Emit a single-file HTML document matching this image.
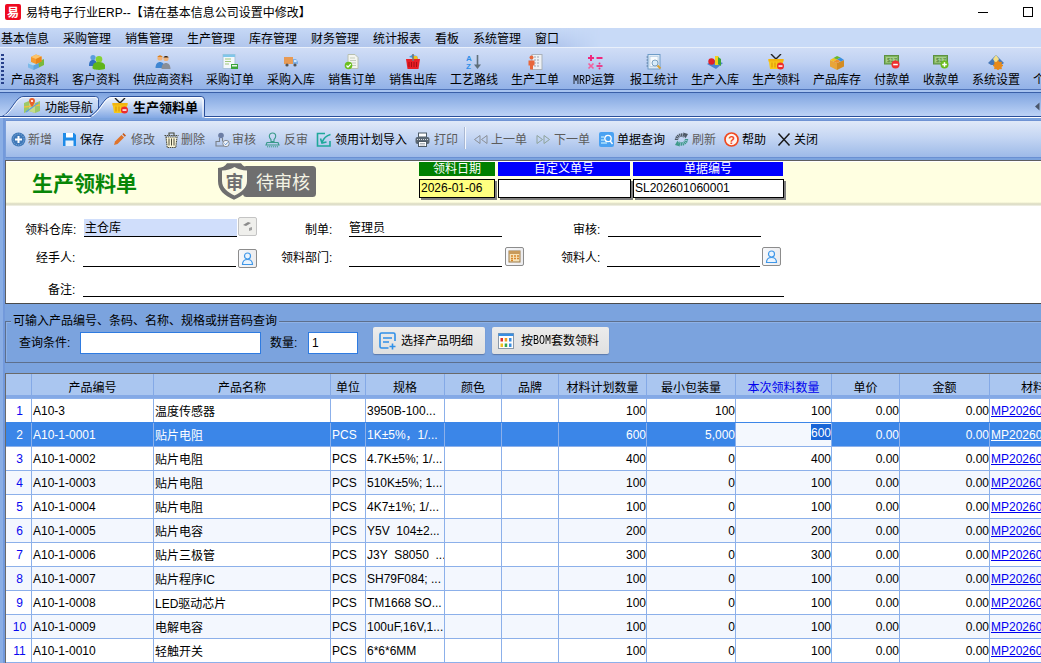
<!DOCTYPE html>
<html lang="zh-CN"><head><meta charset="utf-8"><title>易特电子行业ERP</title>
<style>
*{box-sizing:border-box;margin:0;padding:0}
html,body{width:1041px;height:663px;overflow:hidden}
body{position:relative;background:#7ba3de;font-family:"Liberation Sans","Noto Sans CJK SC","WenQuanYi Zen Hei",sans-serif;font-size:12px;color:#000;line-height:1}
.abs{position:absolute}
#title{position:absolute;left:0;top:0;width:1041px;height:28px;background:#fff}
#title .logo{position:absolute;left:5px;top:4px;width:16px;height:16px;background:#ee0a20;border-radius:2px;color:#fff;font-size:12px;font-weight:bold;line-height:16px;text-align:center;font-family:"Noto Sans CJK SC",sans-serif}
#title .tt{position:absolute;left:26px;top:6px;font-size:12px;line-height:15px;font-family:"Liberation Sans","Noto Sans CJK SC",sans-serif;white-space:nowrap;letter-spacing:0}
#title .min{position:absolute;left:978px;top:12px;width:10px;height:1px;background:#000}
#title .max{position:absolute;left:1023px;top:7px;width:10px;height:10px;border:1px solid #000}
#menu{position:absolute;left:0;top:28px;width:1041px;height:19px;background:#c8daf7}
#menu:before{content:"";position:absolute;left:0;top:0;width:600px;height:19px;background:linear-gradient(#c6d8f6,#b1c6ec);-webkit-mask-image:linear-gradient(90deg,#000 0,#000 560px,transparent 600px);mask-image:linear-gradient(90deg,#000 0,#000 560px,transparent 600px)}
#menu span{position:absolute;top:5px;line-height:13px;white-space:nowrap}
#tb1{position:absolute;left:0;top:47px;width:1041px;height:43px;background:linear-gradient(#d0ddf6 0%,#bfd1f2 35%,#a8c1ed 65%,#93b2e7 100%);border-top:1px solid #e9f0fb;border-bottom:1px solid #4f74ba}
#tb1 .grip{position:absolute;left:1px;top:6px;width:3px;height:32px;background:repeating-linear-gradient(#27408b 0,#27408b 2px,transparent 2px,transparent 4px)}
#tb1 .it{position:absolute;top:26px;line-height:13px;white-space:nowrap;text-align:center}
#tb1 svg{position:absolute;top:6px}
#tabs{position:absolute;left:0;top:90px;width:1041px;height:30px}
#tb2{position:absolute;left:5px;top:120px;width:1036px;height:38px;background:linear-gradient(#e0e9f8 0%,#c5d6f3 45%,#9dbae8 100%);border-left:1px solid #7a9fdb;border-top:1px solid #6f93d3;border-bottom:1px solid #6a90d2}
#tb2 span{position:absolute;top:13px;line-height:13px;white-space:nowrap}
#tb2 span.d{color:#5c5c5c}
#tb2 svg{position:absolute;top:11px}
#yel{position:absolute;left:5px;top:160px;width:1036px;height:46px;border-left:1px solid #5f5f5f;border-top:1px solid #5f5f5f;background:linear-gradient(#ffffff 0,#ffffff 1px,#ffffe1 1px,#ffffe1 41px,#d8d8c0 43px,#f4f4ea 45px)}
#yel h1{position:absolute;left:26px;top:11px;font-size:21px;line-height:24px;font-weight:bold;color:#078607;font-family:"Liberation Sans","Noto Sans CJK SC",sans-serif;white-space:nowrap}
.lab{position:absolute;top:1px;height:14px;color:#fff;text-align:center;line-height:15px;font-size:12px}
.fld{position:absolute;top:18px;height:19px;border:1px solid #000;background:#fff;box-shadow:2px 2px 0 #808080;line-height:16px;padding-left:1px;font-size:12px;white-space:nowrap}
#form{position:absolute;left:5px;top:206px;width:1036px;height:98px;background:#fff;border-left:1px solid #5f5f5f;border-bottom:1px solid #4a4a4a}
#form .l{position:absolute;line-height:13px;white-space:nowrap;text-align:right}
#form .u{position:absolute;height:1px;background:#000}
#form .b{position:absolute;width:19px;height:19px;border:1px solid #c4c4c4;border-radius:2px;background:#efefec}
#form .b.bl{background:linear-gradient(90deg,#f7f8fb,#ececee);border-color:#8c8c8c}
#fs{position:absolute;left:5px;top:321px;width:1040px;height:42px;border:1px solid #5d6f8c;box-shadow:inset 1px 1px 0 #8fb2e6}
#fs .lg{position:absolute;left:5px;top:-7px;background:#7ba3de;line-height:13px;padding:0 2px;white-space:nowrap}
.inp{position:absolute;background:#fff;border:1px solid #2f7be0;line-height:18px;font-size:12px}
.btn{position:absolute;top:327px;height:27px;background:linear-gradient(#ececec,#e0e0e0);border-radius:2px;box-shadow:0 1px 1px rgba(60,80,120,.5);line-height:29px;white-space:nowrap}
#grid{position:absolute;left:5px;top:373px;width:1036px;height:290px;background:#fff;border-left:1px solid #6a6a6a;border-top:1px solid #6a6a6a;overflow:hidden}
.ghead{position:absolute;left:0;top:0;width:1100px;height:25px;background:linear-gradient(#aac6f0 0,#aac6f0 21px,#84a9e6 21px,#84a9e6 25px)}
.hc{position:absolute;top:0;height:21px;border-left:1px solid #84a9e6;text-align:center;line-height:29px;white-space:nowrap}
.hc:first-child{border-left:none}
.hc.blue{color:#0000ee}
.gr{position:absolute;left:0;width:1100px;height:24px;background:#fff;border-top:1px solid #8cb0ea}
.gr.alt{background:#f3f7fe}
.gr.sel{background:#3b86e8;color:#fff;border-top-color:#3b86e8}
.c{position:absolute;top:0;height:23px;border-left:1px solid #8cb0ea;line-height:25px;white-space:pre;overflow:hidden;padding-left:1px}
.c:first-child{border-left:none}
.c.num{color:#0808f0;text-align:center;padding:0 0 0 3px}
.gr.sel .c.num{color:#fff}
.c.r{text-align:right;padding-right:0}
.c.lnk{color:#0000f0;text-decoration:underline;text-underline-offset:1px}
.gr.sel .c.lnk{color:#fff}
.c.edit{background:#f4f8fe;text-align:right;padding:0;line-height:15px}
.c.edit .hl{display:inline-block;background:#1a66d6;color:#fff;height:16px;line-height:19px;vertical-align:top;margin-top:1px;overflow:hidden}
i{font-style:normal;font-family:"Liberation Mono","DejaVu Sans Mono",monospace;font-size:10px;letter-spacing:0;display:inline-block;transform:scaleY(1.2);transform-origin:50% 75%}
.c.cj{line-height:27px}
#lb1{position:absolute;left:0;top:118px;width:3px;height:545px;background:#8aaee5}
#lb2{position:absolute;left:3px;top:118px;width:2px;height:545px;background:#7299db}

</style></head><body>
<div id="title"><div class="logo">易</div><div class="tt">易特电子行业ERP--【请在基本信息公司设置中修改】</div><div class="min"></div><div class="max"></div></div>
<div id="menu"><span style="left:1px">基本信息</span><span style="left:63px">采购管理</span><span style="left:125px">销售管理</span><span style="left:187px">生产管理</span><span style="left:249px">库存管理</span><span style="left:311px">财务管理</span><span style="left:373px">统计报表</span><span style="left:435px">看板</span><span style="left:473px">系统管理</span><span style="left:535px">窗口</span></div>
<div id="tb1"><div class="grip"></div>
<svg style="left:28px" width="16" height="16" viewBox="0 0 16 16"><path d="M0 9.500l5.500-2.500 5.500 2v4.500l-5.500 2.500-5.500-2.500z" fill="#7db9e8"/><path d="M0 9.500l5.500 2 5.500-2.500-5.500-2z" fill="#b5dbf5"/><path d="M5.500 11.500v4.500l5.500-2.500v-4.500z" fill="#5fa4dc"/><path d="M10.500 7.500l5.500-2.500v6l-5 2.500z" fill="#79b93c"/><path d="M3 3l5-2.500 5.500 2v5l-5.500 2.500-5-2z" fill="#f59a2e"/><path d="M3 3l5 2 5.500-2.500-5.500-2z" fill="#fbc46c"/><path d="M8 5v5l5.500-2.500v-5z" fill="#e8851a"/></svg>
<div class="it" style="left:11px">产品资料</div>
<svg style="left:89px" width="16" height="16" viewBox="0 0 16 16"><circle cx="4" cy="3.500" r="2.600" fill="#5a9ede"/><path d="M0 12c0-4.500 1.500-6 4-6s4 1.500 4 6z" fill="#2f6fc0"/><circle cx="10" cy="5.200" r="3.300" fill="#86d232"/><path d="M3.500 14c0-4.500 2.500-6 6.500-6s6.500 1.500 6.500 6c0 2.500-13 2.500-13 0z" fill="#5fb51a"/></svg>
<div class="it" style="left:72px">客户资料</div>
<svg style="left:155px" width="16" height="16" viewBox="0 0 16 16"><circle cx="5" cy="4" r="2.600" fill="#f0b27a"/><path d="M2.500 3c.5-2 4.500-2 5 0z" fill="#d9801e"/><path d="M0.500 14c0-4 2-6 4.500-6s4.500 2 4.500 6z" fill="#3f86d2"/><circle cx="11" cy="4.500" r="2.600" fill="#f0b27a"/><path d="M8.500 3.500c.5-2 4.500-2 5 0z" fill="#3a2a1a"/><path d="M6.500 15c0-4 2-6 4.500-6s4.500 2 4.500 6z" fill="#8a8f98"/></svg>
<div class="it" style="left:133px">供应商资料</div>
<svg style="left:222px" width="16" height="16" viewBox="0 0 16 16"><rect x="1" y="0.500" width="12" height="14" fill="#f4f8fb" stroke="#a9c4d8"/><rect x="1" y="0.500" width="12" height="2.500" fill="#7fc6ea"/><path d="M3 5h6M3 7.500h6M3 10h4" stroke="#9fc77a" stroke-width="1"/><rect x="9" y="10" width="7" height="5" fill="#3aa53a"/><rect x="10" y="11" width="5" height="1.500" fill="#e8f6e8"/></svg>
<div class="it" style="left:206px">采购订单</div>
<svg style="left:283px" width="16" height="16" viewBox="0 0 16 16"><rect x="1" y="3" width="9" height="7" fill="#e79a55"/><path d="M10 5h3l2 2.500v2.500h-5z" fill="#7fb0e6"/><rect x="11" y="6" width="2.500" height="2" fill="#d5e8fb"/><circle cx="4" cy="11" r="1.600" fill="#555"/><circle cx="12" cy="11" r="1.600" fill="#555"/></svg>
<div class="it" style="left:267px">采购入库</div>
<svg style="left:344px" width="16" height="16" viewBox="0 0 16 16"><path d="M4 0.500h7l3 3v11h-10z" fill="#f3f5f0" stroke="#b8c0b0"/><path d="M6 4h5M6 6.500h6M6 9h6M6 11.500h6" stroke="#c3cbbb" stroke-width="1"/><circle cx="4.500" cy="11.500" r="3.800" fill="#6bbf1f"/><path d="M2.500 11.500l1.500 1.600 2.800-3" stroke="#fff" stroke-width="1.300" fill="none"/></svg>
<div class="it" style="left:328px">销售订单</div>
<svg style="left:405px" width="16" height="16" viewBox="0 0 16 16"><path d="M4 3l3-2 5 1 1 3z" fill="#3a9ae0"/><path d="M8 2l4 0 1 3h-5z" fill="#f0c020"/><path d="M1 5h14l-1.500 10h-11z" fill="#e81e25"/><path d="M4 8v5M6.500 8v5M9 8v5M11.500 8v5" stroke="#a80d12" stroke-width="1"/><rect x="7.200" y="0" width="1.600" height="7" fill="#777"/></svg>
<div class="it" style="left:389px">销售出库</div>
<svg style="left:466px" width="16" height="16" viewBox="0 0 16 16"><text x="0" y="7" font-size="8" font-weight="bold" fill="#2f8fe8" font-family="Liberation Sans,sans-serif">A</text><text x="0" y="15" font-size="8" font-weight="bold" fill="#2f8fe8" font-family="Liberation Sans,sans-serif">Z</text><path d="M11.500 1v11" stroke="#5f6f7a" stroke-width="1.600"/><path d="M8 10.500h7l-3.500 4.500z" fill="#5f6f7a"/></svg>
<div class="it" style="left:450px">工艺路线</div>
<svg style="left:527px" width="16" height="16" viewBox="0 0 16 16"><rect x="5" y="0.500" width="10" height="15" fill="#eef1f4" stroke="#aab2bb"/><path d="M7 3h6M7 6h6M7 9h6M7 12h6" stroke="#9aa4b0" stroke-width="1.200" stroke-dasharray="2 1"/><circle cx="4.500" cy="3.500" r="2" fill="#e8673a"/><path d="M1.500 6.500h6v5h-1.500v4h-3v-4h-1.500z" fill="#e8673a"/></svg>
<div class="it" style="left:511px">生产工单</div>
<svg style="left:587px" width="16" height="16" viewBox="0 0 16 16"><path d="M1 4h6M4 1v6" stroke="#f0287c" stroke-width="2"/><path d="M9.500 4h6" stroke="#f0287c" stroke-width="2"/><path d="M1.500 9.500l5 5M6.500 9.500l-5 5" stroke="#f3609c" stroke-width="1.700"/><path d="M9.500 12h6" stroke="#f0287c" stroke-width="1.700"/><circle cx="12.500" cy="9.500" r="1" fill="#f0287c"/><circle cx="12.500" cy="14.500" r="1" fill="#f0287c"/></svg>
<div class="it" style="left:573px"><i>MRP</i>运算</div>
<svg style="left:646px" width="16" height="16" viewBox="0 0 16 16"><rect x="2" y="0.500" width="12" height="14.500" fill="#dfeaf4" stroke="#6e9cc8"/><rect x="4" y="2.500" width="8" height="10" fill="#f8fbfd" stroke="#a8c4de" stroke-width=".6"/><path d="M2 3h-1.500M2 6h-1.500M2 9h-1.500M2 12h-1.500" stroke="#56789a" stroke-width="1"/><circle cx="9" cy="9" r="3" fill="#d8ecfa" stroke="#7aa0c0"/><path d="M11.500 11.500l3 3" stroke="#d9a030" stroke-width="2"/></svg>
<div class="it" style="left:630px">报工统计</div>
<svg style="left:707px" width="16" height="16" viewBox="0 0 16 16"><path d="M0 10l7-4 9 3-7 6z" fill="#4f84cf"/><circle cx="4.500" cy="7.500" r="3.200" fill="#e0202a"/><rect x="8" y="2" width="3.500" height="9" fill="#f2d21a"/><path d="M11 3l3 2v7l-3-2z" fill="#3da33a"/></svg>
<div class="it" style="left:691px">生产入库</div>
<svg style="left:768px" width="16" height="16" viewBox="0 0 16 16"><path d="M3 0l5 5 5-5" stroke="#222" stroke-width="1.400" fill="none"/><path d="M0.500 5h15l-1.500 10h-12z" fill="#f7c81a"/><path d="M0.500 5h15v2.500h-15z" fill="#f2b40e"/><path d="M4 8.500v5M7 8.500v5M10 8.500v5" stroke="#e09a08" stroke-width="1.200"/><circle cx="12.500" cy="12" r="3.500" fill="#ee2b2b"/><rect x="10.500" y="11.300" width="4" height="1.500" fill="#fff"/></svg>
<div class="it" style="left:752px">生产领料</div>
<svg style="left:829px" width="16" height="16" viewBox="0 0 16 16"><path d="M1 6l7 3v7l-7-3.500z" fill="#e8a53a"/><path d="M8 9l7-3v6.500l-7 3.500z" fill="#d48c22"/><path d="M1 6l3.500-2 3.500 1.500-3.500 2z" fill="#f4c21e"/><path d="M4.500 4l3.500-2 3.500 1.500-3.500 2z" fill="#69b82a"/><path d="M8 5.500l3.500-2 3.500 2.500-3.500 1.500z" fill="#3a8fe0"/><path d="M4.500 7.500l3.500-2 3.500 1.500-3.500 2z" fill="#f0902a"/></svg>
<div class="it" style="left:813px">产品库存</div>
<svg style="left:884px" width="16" height="16" viewBox="0 0 16 16"><rect x="0.500" y="1.500" width="14" height="8.500" fill="#7fb35e" stroke="#5d9240"/><rect x="2" y="3" width="11" height="5.500" fill="#a5cf8a"/><text x="3" y="8" font-size="6" fill="#4b7d32" font-family="Liberation Sans,sans-serif">$17</text><circle cx="11.500" cy="10.500" r="4" fill="#ee3030"/><rect x="9.200" y="9.800" width="4.600" height="1.500" fill="#fff"/></svg>
<div class="it" style="left:874px">付款单</div>
<svg style="left:933px" width="16" height="16" viewBox="0 0 16 16"><rect x="0.500" y="1.500" width="14" height="8.500" fill="#7fb35e" stroke="#5d9240"/><rect x="2" y="3" width="11" height="5.500" fill="#a5cf8a"/><text x="3" y="8" font-size="6" fill="#4b7d32" font-family="Liberation Sans,sans-serif">$17</text><circle cx="11.500" cy="10.500" r="4" fill="#6bbb1e"/><rect x="9.200" y="9.800" width="4.600" height="1.500" fill="#fff"/><rect x="10.750" y="8.200" width="1.500" height="4.600" fill="#fff"/></svg>
<div class="it" style="left:923px">收款单</div>
<svg style="left:988px" width="16" height="16" viewBox="0 0 16 16"><path d="M0 9l8-8 8 8-3 2h-10z" fill="#4778b8"/><path d="M8 1l3 4-3 5-3-5z" fill="#f4e08a"/><circle cx="10" cy="11.500" r="4" fill="#e88a1a"/><circle cx="10" cy="11.500" r="1.500" fill="#fbe7b0"/><path d="M10 6.500v10M5 11.500h10M6.500 8l7 7M13.500 8l-7 7" stroke="#e88a1a" stroke-width="1.500"/></svg>
<div class="it" style="left:972px">系统设置</div>
<div class="it" style="left:1033px">个人</div>
</div>
<div id="tabs"><svg width="1041" height="30" viewBox="0 0 1041 30" style="position:absolute;left:0;top:0">
<defs><linearGradient id="tg0" x1="0" y1="0" x2="0" y2="1"><stop offset="0" stop-color="#7fa4e0"/><stop offset="1" stop-color="#bdd3f6"/></linearGradient>
<linearGradient id="tg1" x1="0" y1="0" x2="0" y2="1"><stop offset="0" stop-color="#dbe6f9"/><stop offset="1" stop-color="#a3bfec"/></linearGradient>
<linearGradient id="tg2" x1="0" y1="0" x2="0" y2="1"><stop offset="0" stop-color="#f4f8fd"/><stop offset=".45" stop-color="#c3d5f3"/><stop offset="1" stop-color="#82a8e4"/></linearGradient></defs>
<rect x="0" y="0" width="1041" height="2" fill="#a8c4f0"/>
<rect x="0" y="2" width="1041" height="1" fill="#3a60a8"/>
<rect x="0" y="3" width="1041" height="23" fill="url(#tg0)"/>
<rect x="0" y="28" width="1041" height="2" fill="#7ba3de"/>
<path d="M2 26.500C9 24 15 10 20 7.500q1.500-1 4-1h71.500q3 0 3 3v17z" fill="url(#tg1)" stroke="#2f539c" stroke-width="1"/>
<path d="M4.500 25.500C11 23 16 10.500 21 8.300q1.500-.8 3.500-.8h70.500q2.500 0 2.500 2.500" fill="none" stroke="#f3f7fd" stroke-width="1"/>
<rect x="0" y="26" width="1041" height="1" fill="#2a4f9a"/>
<rect x="0" y="27" width="1041" height="1" fill="#ffffff"/>
<path d="M90 28C97 24 103 10 108 7.500q1.500-1 4-1h89q3.500 0 3.500 3.500v18z" fill="url(#tg2)"/>
<path d="M89 26.500C97 24 103 10 108 7.500q1.500-1 4-1h89q3.500 0 3.500 3.500v16.500" fill="none" stroke="#2a4f9a" stroke-width="1"/>
<path d="M91.500 26.500C99 23 104 10.500 109 8.300q1.500-.8 3.500-.8h88q2.500 0 2.500 2.500v17.500" fill="none" stroke="#ffffff" stroke-width="1"/>
<path d="M1039.500 12.500v8l-4.500-4z" fill="#4a566a"/>
</svg>
<svg style="position:absolute;left:24px;top:8px" width="16" height="16" viewBox="0 0 16 16"><path d="M0 5l5-2 6 2 5-2v10l-5 2-6-2-5 2z" fill="#9cc96a"/><path d="M5 3l6 2v10l-6-2z" fill="#c6dc8a"/><path d="M0 9l16-2" stroke="#f0c040" stroke-width="1.500"/><path d="M2 14l12-9" stroke="#5da0e0" stroke-width="1.200"/><path d="M8 0a3 3 0 0 1 3 3c0 2-3 6-3 6s-3-4-3-6a3 3 0 0 1 3-3z" fill="#e8602a"/><circle cx="8" cy="3" r="1.100" fill="#fff"/></svg>
<span style="position:absolute;left:45px;top:11px;line-height:14px;font-size:12px;white-space:nowrap">功能导航</span>
<svg style="position:absolute;left:112px;top:8px" width="16" height="16" viewBox="0 0 16 16"><path d="M3 0l5 5 5-5" stroke="#222" stroke-width="1.400" fill="none"/><path d="M0.500 5h15l-1.500 10h-12z" fill="#f7c81a"/><path d="M0.500 5h15v2.500h-15z" fill="#f2b40e"/><path d="M4 8.500v5M7 8.500v5M10 8.500v5" stroke="#e09a08" stroke-width="1.200"/><circle cx="12.500" cy="12" r="3.500" fill="#ee2b2b"/><rect x="10.500" y="11.300" width="4" height="1.500" fill="#fff"/></svg>
<span style="position:absolute;left:133px;top:11px;line-height:14px;font-size:13px;font-weight:bold;white-space:nowrap;font-family:'Liberation Sans','Noto Sans CJK SC',sans-serif">生产领料单</span>
</div>
<div id="lb1"></div><div id="lb2"></div>
<div id="tb2">
<svg style="left:5px" width="16" height="16" viewBox="0 0 16 16"><circle cx="7.500" cy="7.500" r="7" fill="#3f78b8"/><circle cx="7.500" cy="7.500" r="5.500" fill="none" stroke="#9cc0e6" stroke-width=".8" stroke-dasharray="1 1"/><path d="M4 7.500h7M7.500 4v7" stroke="#fff" stroke-width="2"/></svg><span class="d" style="left:22px">新增</span>
<svg style="left:56px" width="16" height="16" viewBox="0 0 16 16"><path d="M1 1h11l2 2v11h-13z" fill="#1e8be8"/><rect x="4" y="1" width="7" height="4.500" fill="#fff"/><rect x="3.500" y="8.500" width="8" height="5.500" fill="#e8f2fc"/></svg><span class="" style="left:74px">保存</span>
<svg style="left:107px" width="16" height="16" viewBox="0 0 16 16"><path d="M1 13l1-3.500 6.500-6.500 2.500 2.500-6.500 6.500z" fill="#e0742a"/><path d="M9.300 2.200l1.200-1.200 2.500 2.500-1.200 1.200z" fill="#c85a1a"/></svg><span class="d" style="left:125px">修改</span>
<svg style="left:158px" width="16" height="16" viewBox="0 0 16 16"><path d="M0.500 3.500h14" stroke="#4a4a3a" stroke-width="1.200" stroke-dasharray="1.500 .7"/><path d="M5 3.500v-2.500h5v2.500" fill="none" stroke="#4a4a3a" stroke-width="1.100"/><path d="M2 5l1.200 10.500h8.600l1.200-10.500z" fill="#fbf6d8" stroke="#4a4a3a" stroke-width="1.100" stroke-dasharray="1.500 .7"/><path d="M5 6.500v7M7.500 6.500v7M10 6.500v7" stroke="#4a4a3a" stroke-width="1"/></svg><span class="d" style="left:175px">删除</span>
<svg style="left:209px" width="16" height="16" viewBox="0 0 16 16"><circle cx="6" cy="3.500" r="2.800" fill="#6b7da5"/><path d="M4.500 6v3.500h-3.500v4.500h9" fill="none" stroke="#7a8088" stroke-width="1.100"/><path d="M7.500 6v3.500" stroke="#7a8088" stroke-width="1.100"/><circle cx="11" cy="11.500" r="3.200" fill="#eef2f8" stroke="#7a8088" stroke-width=".9"/><path d="M9.500 11.500l1.200 1.200 2-2.300" stroke="#5a8fd0" stroke-width="1" fill="none"/></svg><span class="d" style="left:226px">审核</span>
<svg style="left:259px" width="16" height="16" viewBox="0 0 16 16"><path d="M7.500 1a3.200 3.200 0 0 1 3.200 3.200c0 1.500-1 2.500-1.700 3.300v2h-3v-2c-.7-.8-1.700-1.800-1.700-3.300a3.200 3.200 0 0 1 3.200-3.200z" fill="none" stroke="#3a9a8a" stroke-width="1.100"/><path d="M2 10.500h11l1 2.500h-13z" fill="none" stroke="#3a9a8a" stroke-width="1.100"/><path d="M2 14.800h11" stroke="#3a9a8a" stroke-width="1" stroke-dasharray="1.200 .8"/></svg><span class="d" style="left:278px">反审</span>
<svg style="left:310px" width="16" height="16" viewBox="0 0 16 16"><path d="M9 1.500h-7.500v12.500h12.500v-5" fill="none" stroke="#1fa89a" stroke-width="1.600"/><path d="M14.500 2.500c-4 1-7 4-8.500 8" fill="none" stroke="#1fa89a" stroke-width="1.600"/><path d="M4.500 6.500l1.500 4.500 4.500-1" fill="none" stroke="#1fa89a" stroke-width="1.600"/></svg><span class="" style="left:329px">领用计划导入</span>
<svg style="left:409px" width="16" height="16" viewBox="0 0 16 16"><rect x="3.500" y="1" width="8" height="4" fill="#fff" stroke="#4d5a66" stroke-width="1"/><rect x="0.500" y="5" width="14" height="7" rx="2" fill="#5a6672"/><path d="M2 7.500h11" stroke="#d8dde2" stroke-width="1" stroke-dasharray="1 1"/><rect x="3.500" y="9.500" width="8" height="5" fill="#fff" stroke="#4d5a66" stroke-width="1"/><path d="M5 11.500h5M5 13h5" stroke="#8a949e" stroke-width=".7"/></svg><span class="d" style="left:428px">打印</span>
<svg style="left:468px" width="16" height="16" viewBox="0 0 16 16"><path d="M6 3.500v8l-5.500-4z" fill="none" stroke="#8a8f96" stroke-width="1"/><path d="M13 3.500v8l-5.500-4z" fill="none" stroke="#8a8f96" stroke-width="1"/></svg><span class="d" style="left:485px">上一单</span>
<svg style="left:530px" width="16" height="16" viewBox="0 0 16 16"><path d="M1 3.500v8l5.500-4z" fill="none" stroke="#8fa39a" stroke-width="1"/><path d="M8 3.500v8l5.500-4z" fill="none" stroke="#8fa39a" stroke-width="1"/></svg><span class="d" style="left:548px">下一单</span>
<svg style="left:593px" width="16" height="16" viewBox="0 0 16 16"><rect x="0" y="0" width="15" height="15" rx="2" fill="#4aa2f2"/><circle cx="9" cy="6.500" r="3.200" fill="none" stroke="#fff" stroke-width="1.300"/><path d="M11.200 9l2.300 3" stroke="#fff" stroke-width="1.400"/><path d="M2 5h3M2 8h3M2 11h6" stroke="#dff" stroke-width="1.100"/></svg><span class="" style="left:611px">单据查询</span>
<svg style="left:668px" width="16" height="16" viewBox="0 0 16 16"><path d="M2.500 8a5 5 0 0 1 8.500-3.500" fill="none" stroke="#4f5a66" stroke-width="3.400" stroke-dasharray="1.300 .5"/><path d="M12.500 7a5 5 0 0 1-8.500 3.500" fill="none" stroke="#3f9a8a" stroke-width="3.400" stroke-dasharray="1.300 .5"/><path d="M9 0.500l5 1.500-2.500 4.500z" fill="#4f5a66"/><path d="M6 14.500l-5-1.500 2.500-4.500z" fill="#3f9a8a"/></svg><span class="d" style="left:686px">刷新</span>
<svg style="left:718px" width="16" height="16" viewBox="0 0 16 16"><circle cx="7.500" cy="7.500" r="6.500" fill="#fff4ec" stroke="#f0481e" stroke-width="1.700"/><text x="7.500" y="11.500" font-size="11" font-weight="bold" text-anchor="middle" fill="#f0481e" font-family="Liberation Sans,sans-serif">?</text></svg><span class="" style="left:736px">帮助</span>
<svg style="left:771px" width="16" height="16" viewBox="0 0 16 16"><path d="M1.500 1.500l11 12M12.500 1.500l-11 12" stroke="#1a1a1a" stroke-width="1.500"/></svg><span class="" style="left:788px">关闭</span>
<div style="position:absolute;left:458px;top:6px;width:2px;height:22px;background:linear-gradient(90deg,#a9b8d3 50%,#f4f7fd 50%)"></div>
</div>
<div id="yel"><h1>生产领料单</h1>
<svg style="position:absolute;left:211px;top:1px" width="102" height="40" viewBox="0 0 102 40">
<rect x="26" y="4" width="73" height="31" rx="3.500" fill="#6f6f6f"/>
<path d="M11 1.200h13c2 3 5 4.500 9 4.800v13c0 9-6 14.500-16 18.700c-10-4.200-16-9.700-16-18.700v-13c4-.3 7-1.800 9-4.800z" fill="#6f6f6f"/>
<path d="M17.500 5c3.500 2.200 7.500 3.300 12.500 3.600v10.400c0 7-5.500 11-12.500 14.500c-7-3.500-12.500-7.500-12.500-14.500v-10.400c5-.3 9-1.400 12.500-3.600z" fill="#fbfae4"/>
<text x="17.500" y="27" font-size="18" text-anchor="middle" fill="#6f6f6f" font-family="Noto Sans CJK SC,sans-serif" font-weight="bold">审</text>
<text x="39" y="26.500" font-size="18" fill="#f4f3e4" font-family="Noto Sans CJK SC,sans-serif">待审核</text>
</svg>
<div class="lab" style="left:413px;width:76px;background:#008000">领料日期</div>
<div class="fld" style="left:413px;width:76px;background:#ffff80">2026-01-06</div>
<div class="lab" style="left:492px;width:132px;background:#0000ff">自定义单号</div>
<div class="fld" style="left:492px;width:133px"></div>
<div class="lab" style="left:627px;width:150px;background:#0000ff">单据编号</div>
<div class="fld" style="left:627px;width:151px">SL202601060001</div>
</div>
<div id="form">
<div class="l" style="left:19px;top:18px">领料仓库:</div>
<div style="position:absolute;left:78px;top:13px;width:153px;height:17px;background:#d0defb;line-height:19px;padding-left:1px">主仓库</div>
<div class="u" style="left:78px;top:30px;width:153px"></div>
<div class="b" style="left:232px;top:11px"><svg width="17" height="17" viewBox="0 0 17 17" style="position:absolute;left:0;top:0"><path d="M4 7l5-3 3 1-5 3z" fill="#8a8a8a"/><path d="M10 10l3-1v3l-3 1z" fill="#a0a0a0"/></svg></div>
<div class="l" style="left:299px;top:18px">制单:</div>
<div style="position:absolute;left:343px;top:16px;line-height:13px">管理员</div>
<div class="u" style="left:343px;top:30px;width:153px"></div>
<div class="l" style="left:567px;top:18px">审核:</div>
<div class="u" style="left:602px;top:30px;width:153px"></div>
<div class="l" style="left:30px;top:46px">经手人:</div>
<div class="u" style="left:77px;top:60px;width:153px"></div>
<div class="b bl" style="left:232px;top:43px"><svg width="17" height="17" viewBox="0 0 17 17" style="position:absolute;left:0;top:0"><circle cx="8.500" cy="6" r="3" fill="#eaf4fe" stroke="#3f97e8" stroke-width="1.200"/><path d="M3.500 14.500c0-3.500 2-5 5-5s5 1.500 5 5z" fill="#eaf4fe" stroke="#3f97e8" stroke-width="1.200"/></svg></div>
<div class="l" style="left:275px;top:46px">领料部门:</div>
<div class="u" style="left:343px;top:60px;width:153px"></div>
<div class="b bl" style="left:499px;top:41px"><svg width="17" height="17" viewBox="0 0 17 17" style="position:absolute;left:0;top:0"><rect x="3" y="3" width="11" height="11" fill="#f6e2b8" stroke="#9a7a4a" stroke-width="1"/><rect x="3" y="3" width="11" height="3" fill="#c89a5a"/><path d="M5 8h2M8 8h2M11 8h2M5 10.500h2M8 10.500h2M11 10.500h2M5 12.500h2" stroke="#d8862a" stroke-width="1.300"/></svg></div>
<div class="l" style="left:555px;top:46px">领料人:</div>
<div class="u" style="left:601px;top:60px;width:153px"></div>
<div class="b bl" style="left:756px;top:41px"><svg width="17" height="17" viewBox="0 0 17 17" style="position:absolute;left:0;top:0"><circle cx="8.500" cy="6" r="3" fill="#eaf4fe" stroke="#3f97e8" stroke-width="1.200"/><path d="M3.500 14.500c0-3.500 2-5 5-5s5 1.500 5 5z" fill="#eaf4fe" stroke="#3f97e8" stroke-width="1.200"/></svg></div>
<div class="l" style="left:42px;top:78px">备注:</div>
<div class="u" style="left:77px;top:90px;width:701px"></div>
</div>
<div id="fs"><div class="lg">可输入产品编号、条码、名称、规格或拼音码查询</div></div>
<div style="position:absolute;left:19px;top:337px;line-height:13px;white-space:nowrap">查询条件:</div>
<div class="inp" style="left:80px;top:332px;width:181px;height:22px"></div>
<div style="position:absolute;left:270px;top:337px;line-height:13px;white-space:nowrap">数量:</div>
<div class="inp" style="left:308px;top:332px;width:50px;height:22px;padding-left:3px;line-height:20px">1</div>
<div class="btn" style="left:373px;width:112px"><svg style="position:absolute;left:6px;top:5px" width="18" height="18" viewBox="0 0 18 18"><path d="M16 9v-6.500q0-1.500-1.500-1.500h-12q-1.500 0-1.500 1.500v12q0 1.500 1.500 1.500h7" fill="none" stroke="#2f8fe8" stroke-width="1.600"/><path d="M4 6h9M4 10h6" stroke="#2f8fe8" stroke-width="1.600"/><path d="M10.500 14.500h6M13.500 11.500v6" stroke="#2f8fe8" stroke-width="1.600"/></svg><span style="position:absolute;left:28px;top:0">选择产品明细</span></div>
<div class="btn" style="left:492px;width:117px"><svg style="position:absolute;left:6px;top:6px" width="16" height="16" viewBox="0 0 16 16"><rect x="0.500" y="0.500" width="15" height="15" fill="#fdfdfd" stroke="#8a98a8"/><rect x="0.500" y="0.500" width="15" height="2.500" fill="#3a8ee0"/><rect x="2.500" y="5" width="2.500" height="3.500" fill="#e0302a"/><rect x="6.700" y="5" width="2.500" height="3.500" fill="#f0a020"/><rect x="11" y="5" width="2.500" height="3.500" fill="#3a8ee0"/><rect x="2.500" y="10.500" width="2.500" height="3.500" fill="#f0c020"/><rect x="6.700" y="10.500" width="2.500" height="3.500" fill="#3aa84a"/><rect x="11" y="10.500" width="2.500" height="3.500" fill="#3a8ee0"/></svg><span style="position:absolute;left:29px;top:0">按<i>BOM</i>套数领料</span></div>
<div id="grid">
<div class="ghead">
<div class="hc" style="left:-1px;width:26px"></div>
<div class="hc" style="left:25px;width:122px">产品编号</div>
<div class="hc" style="left:147px;width:177px">产品名称</div>
<div class="hc" style="left:324px;width:35px">单位</div>
<div class="hc" style="left:359px;width:79px">规格</div>
<div class="hc" style="left:438px;width:57px">颜色</div>
<div class="hc" style="left:495px;width:57px">品牌</div>
<div class="hc" style="left:552px;width:88px">材料计划数量</div>
<div class="hc" style="left:640px;width:89px">最小包装量</div>
<div class="hc blue" style="left:729px;width:96px">本次领料数量</div>
<div class="hc" style="left:825px;width:68px">单价</div>
<div class="hc" style="left:893px;width:90px">金额</div>
<div class="hc" style="left:983px;width:71px;text-align:left;padding-left:31px">材料</div>
</div>
<div class="gr" style="top:24px">
<div class="c num" style="left:-1px;width:26px">1</div>
<div class="c" style="left:25px;width:122px">A10-3</div>
<div class="c cj" style="left:147px;width:177px">温度传感器</div>
<div class="c" style="left:324px;width:35px"></div>
<div class="c" style="left:359px;width:79px">3950B-100...</div>
<div class="c" style="left:438px;width:57px"></div>
<div class="c" style="left:495px;width:57px"></div>
<div class="c r" style="left:552px;width:88px">100</div>
<div class="c r" style="left:640px;width:89px">100</div>
<div class="c r" style="left:729px;width:96px">100</div>
<div class="c r" style="left:825px;width:68px">0.00</div>
<div class="c r" style="left:893px;width:90px">0.00</div>
<div class="c lnk" style="left:983px;width:71px">MP20260</div>
</div>
<div class="gr alt sel" style="top:48px">
<div class="c num" style="left:-1px;width:26px">2</div>
<div class="c" style="left:25px;width:122px">A10-1-0001</div>
<div class="c cj" style="left:147px;width:177px">贴片电阻</div>
<div class="c" style="left:324px;width:35px">PCS</div>
<div class="c" style="left:359px;width:79px">1K±5%，1/...</div>
<div class="c" style="left:438px;width:57px"></div>
<div class="c" style="left:495px;width:57px"></div>
<div class="c r" style="left:552px;width:88px">600</div>
<div class="c r" style="left:640px;width:89px">5,000</div>
<div class="c edit" style="left:729px;width:96px"><span class="hl">600</span></div>
<div class="c r" style="left:825px;width:68px">0.00</div>
<div class="c r" style="left:893px;width:90px">0.00</div>
<div class="c lnk" style="left:983px;width:71px">MP20260</div>
</div>
<div class="gr" style="top:72px">
<div class="c num" style="left:-1px;width:26px">3</div>
<div class="c" style="left:25px;width:122px">A10-1-0002</div>
<div class="c cj" style="left:147px;width:177px">贴片电阻</div>
<div class="c" style="left:324px;width:35px">PCS</div>
<div class="c" style="left:359px;width:79px">4.7K±5%; 1/...</div>
<div class="c" style="left:438px;width:57px"></div>
<div class="c" style="left:495px;width:57px"></div>
<div class="c r" style="left:552px;width:88px">400</div>
<div class="c r" style="left:640px;width:89px">0</div>
<div class="c r" style="left:729px;width:96px">400</div>
<div class="c r" style="left:825px;width:68px">0.00</div>
<div class="c r" style="left:893px;width:90px">0.00</div>
<div class="c lnk" style="left:983px;width:71px">MP20260</div>
</div>
<div class="gr alt" style="top:96px">
<div class="c num" style="left:-1px;width:26px">4</div>
<div class="c" style="left:25px;width:122px">A10-1-0003</div>
<div class="c cj" style="left:147px;width:177px">贴片电阻</div>
<div class="c" style="left:324px;width:35px">PCS</div>
<div class="c" style="left:359px;width:79px">510K±5%; 1...</div>
<div class="c" style="left:438px;width:57px"></div>
<div class="c" style="left:495px;width:57px"></div>
<div class="c r" style="left:552px;width:88px">100</div>
<div class="c r" style="left:640px;width:89px">0</div>
<div class="c r" style="left:729px;width:96px">100</div>
<div class="c r" style="left:825px;width:68px">0.00</div>
<div class="c r" style="left:893px;width:90px">0.00</div>
<div class="c lnk" style="left:983px;width:71px">MP20260</div>
</div>
<div class="gr" style="top:120px">
<div class="c num" style="left:-1px;width:26px">5</div>
<div class="c" style="left:25px;width:122px">A10-1-0004</div>
<div class="c cj" style="left:147px;width:177px">贴片电阻</div>
<div class="c" style="left:324px;width:35px">PCS</div>
<div class="c" style="left:359px;width:79px">4K7±1%; 1/...</div>
<div class="c" style="left:438px;width:57px"></div>
<div class="c" style="left:495px;width:57px"></div>
<div class="c r" style="left:552px;width:88px">100</div>
<div class="c r" style="left:640px;width:89px">0</div>
<div class="c r" style="left:729px;width:96px">100</div>
<div class="c r" style="left:825px;width:68px">0.00</div>
<div class="c r" style="left:893px;width:90px">0.00</div>
<div class="c lnk" style="left:983px;width:71px">MP20260</div>
</div>
<div class="gr alt" style="top:144px">
<div class="c num" style="left:-1px;width:26px">6</div>
<div class="c" style="left:25px;width:122px">A10-1-0005</div>
<div class="c cj" style="left:147px;width:177px">贴片电容</div>
<div class="c" style="left:324px;width:35px">PCS</div>
<div class="c" style="left:359px;width:79px">Y5V  104±2...</div>
<div class="c" style="left:438px;width:57px"></div>
<div class="c" style="left:495px;width:57px"></div>
<div class="c r" style="left:552px;width:88px">200</div>
<div class="c r" style="left:640px;width:89px">0</div>
<div class="c r" style="left:729px;width:96px">200</div>
<div class="c r" style="left:825px;width:68px">0.00</div>
<div class="c r" style="left:893px;width:90px">0.00</div>
<div class="c lnk" style="left:983px;width:71px">MP20260</div>
</div>
<div class="gr" style="top:168px">
<div class="c num" style="left:-1px;width:26px">7</div>
<div class="c" style="left:25px;width:122px">A10-1-0006</div>
<div class="c cj" style="left:147px;width:177px">贴片三极管</div>
<div class="c" style="left:324px;width:35px">PCS</div>
<div class="c" style="left:359px;width:79px">J3Y  S8050  ...</div>
<div class="c" style="left:438px;width:57px"></div>
<div class="c" style="left:495px;width:57px"></div>
<div class="c r" style="left:552px;width:88px">300</div>
<div class="c r" style="left:640px;width:89px">0</div>
<div class="c r" style="left:729px;width:96px">300</div>
<div class="c r" style="left:825px;width:68px">0.00</div>
<div class="c r" style="left:893px;width:90px">0.00</div>
<div class="c lnk" style="left:983px;width:71px">MP20260</div>
</div>
<div class="gr alt" style="top:192px">
<div class="c num" style="left:-1px;width:26px">8</div>
<div class="c" style="left:25px;width:122px">A10-1-0007</div>
<div class="c cj" style="left:147px;width:177px">贴片程序IC</div>
<div class="c" style="left:324px;width:35px">PCS</div>
<div class="c" style="left:359px;width:79px">SH79F084; ...</div>
<div class="c" style="left:438px;width:57px"></div>
<div class="c" style="left:495px;width:57px"></div>
<div class="c r" style="left:552px;width:88px">100</div>
<div class="c r" style="left:640px;width:89px">0</div>
<div class="c r" style="left:729px;width:96px">100</div>
<div class="c r" style="left:825px;width:68px">0.00</div>
<div class="c r" style="left:893px;width:90px">0.00</div>
<div class="c lnk" style="left:983px;width:71px">MP20260</div>
</div>
<div class="gr" style="top:216px">
<div class="c num" style="left:-1px;width:26px">9</div>
<div class="c" style="left:25px;width:122px">A10-1-0008</div>
<div class="c cj" style="left:147px;width:177px">LED驱动芯片</div>
<div class="c" style="left:324px;width:35px">PCS</div>
<div class="c" style="left:359px;width:79px">TM1668 SO...</div>
<div class="c" style="left:438px;width:57px"></div>
<div class="c" style="left:495px;width:57px"></div>
<div class="c r" style="left:552px;width:88px">100</div>
<div class="c r" style="left:640px;width:89px">0</div>
<div class="c r" style="left:729px;width:96px">100</div>
<div class="c r" style="left:825px;width:68px">0.00</div>
<div class="c r" style="left:893px;width:90px">0.00</div>
<div class="c lnk" style="left:983px;width:71px">MP20260</div>
</div>
<div class="gr alt" style="top:240px">
<div class="c num" style="left:-1px;width:26px">10</div>
<div class="c" style="left:25px;width:122px">A10-1-0009</div>
<div class="c cj" style="left:147px;width:177px">电解电容</div>
<div class="c" style="left:324px;width:35px">PCS</div>
<div class="c" style="left:359px;width:79px">100uF,16V,1...</div>
<div class="c" style="left:438px;width:57px"></div>
<div class="c" style="left:495px;width:57px"></div>
<div class="c r" style="left:552px;width:88px">100</div>
<div class="c r" style="left:640px;width:89px">0</div>
<div class="c r" style="left:729px;width:96px">100</div>
<div class="c r" style="left:825px;width:68px">0.00</div>
<div class="c r" style="left:893px;width:90px">0.00</div>
<div class="c lnk" style="left:983px;width:71px">MP20260</div>
</div>
<div class="gr" style="top:264px">
<div class="c num" style="left:-1px;width:26px">11</div>
<div class="c" style="left:25px;width:122px">A10-1-0010</div>
<div class="c cj" style="left:147px;width:177px">轻触开关</div>
<div class="c" style="left:324px;width:35px">PCS</div>
<div class="c" style="left:359px;width:79px">6*6*6MM</div>
<div class="c" style="left:438px;width:57px"></div>
<div class="c" style="left:495px;width:57px"></div>
<div class="c r" style="left:552px;width:88px">100</div>
<div class="c r" style="left:640px;width:89px">0</div>
<div class="c r" style="left:729px;width:96px">100</div>
<div class="c r" style="left:825px;width:68px">0.00</div>
<div class="c r" style="left:893px;width:90px">0.00</div>
<div class="c lnk" style="left:983px;width:71px">MP20260</div>
</div>
<div class="gr" style="top:288px"></div>
</div>
</body></html>
